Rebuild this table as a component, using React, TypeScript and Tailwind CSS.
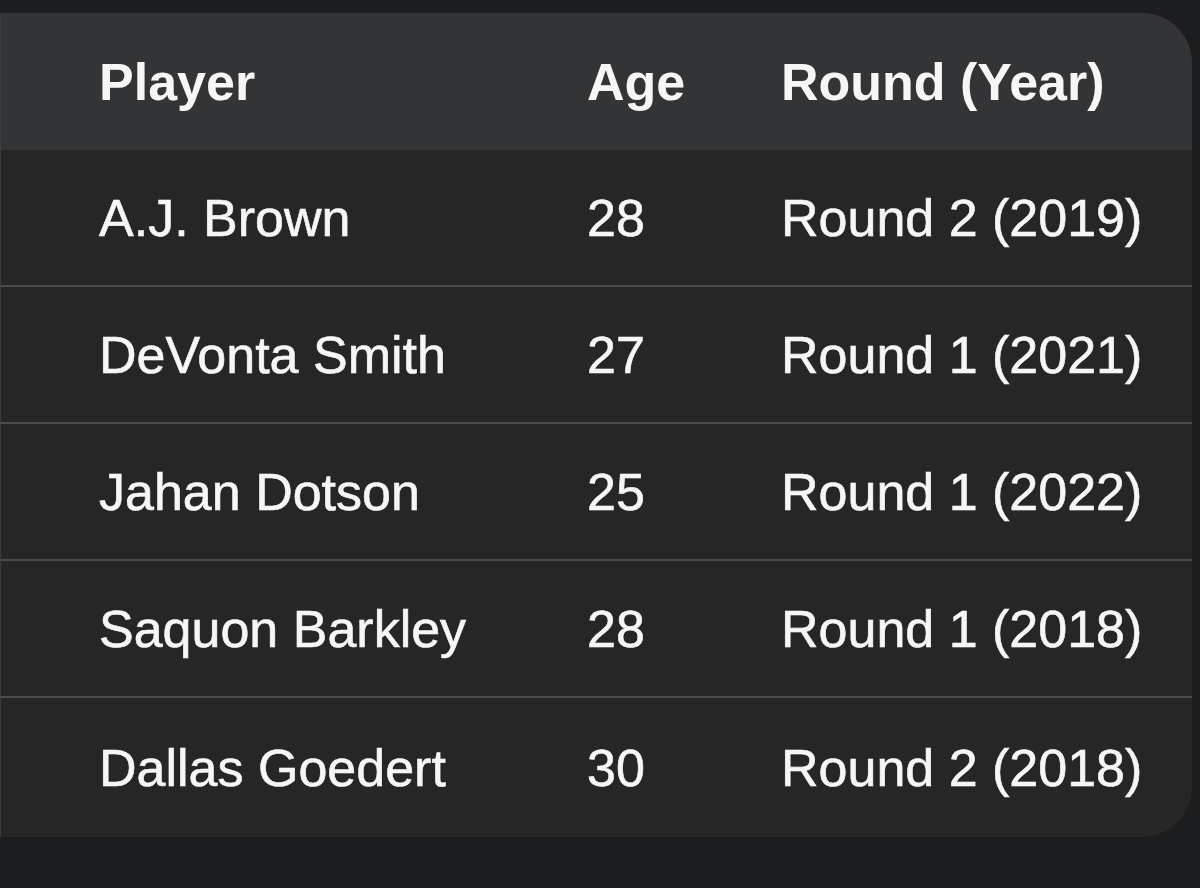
const rows = [
  { player: "A.J. Brown", age: "28", round: "Round 2 (2019)" },
  { player: "DeVonta Smith", age: "27", round: "Round 1 (2021)" },
  { player: "Jahan Dotson", age: "25", round: "Round 1 (2022)" },
  { player: "Saquon Barkley", age: "28", round: "Round 1 (2018)" },
  { player: "Dallas Goedert", age: "30", round: "Round 2 (2018)" },
];

export default function App() {
  return (
    <div
      className="w-[1200px] h-[888px] bg-[#1c1d1f] pt-[13px] text-[#f6f6f6] overflow-hidden"
      style={{ fontFamily: '"Liberation Sans", Arial, sans-serif' }}
    >
      <div className="w-[1192px] rounded-r-[50px] border-l border-[#3b3c3e] overflow-hidden bg-[#262626]">
        <div className="grid grid-cols-[586px_194px_1fr] h-[137px] items-center bg-[#333436] text-[52px] font-bold">
          <div className="pl-[98px]">Player</div>
          <div>Age</div>
          <div>Round (Year)</div>
        </div>
        {rows.map((r, i) => (
          <div
            key={r.player}
            className={
              i === 0
                ? "grid grid-cols-[586px_194px_1fr] h-[135px] items-center text-[52px] [-webkit-text-stroke:0.6px_#f6f6f6]"
                : i === rows.length - 1
                  ? "grid grid-cols-[586px_194px_1fr] h-[141px] items-center text-[52px] border-t-2 border-[#4a4c4c] [-webkit-text-stroke:0.6px_#f6f6f6]"
                  : "grid grid-cols-[586px_194px_1fr] h-[137px] items-center text-[52px] border-t-2 border-[#4a4c4c] [-webkit-text-stroke:0.6px_#f6f6f6]"
            }
          >
            <div className="pl-[98px]">{r.player}</div>
            <div>{r.age}</div>
            <div>{r.round}</div>
          </div>
        ))}
      </div>
    </div>
  );
}
